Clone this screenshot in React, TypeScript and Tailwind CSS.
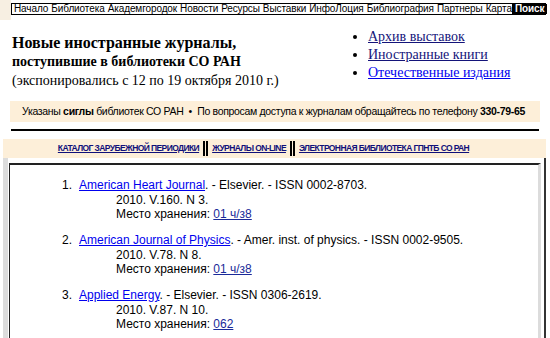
import React from "react";

const navItems = [
  "Начало",
  "Библиотека",
  "Академгородок",
  "Новости",
  "Ресурсы",
  "Выставки",
  "ИнфоЛоция",
  "Библиография",
  "Партнеры",
  "Карта",
];

const journals = [
  {
    title: "American Heart Journal",
    rest: ". - Elsevier. - ISSN 0002-8703.",
    issue: "2010. V.160. N 3.",
    place: "01 ч/з8",
  },
  {
    title: "American Journal of Physics",
    rest: ". - Amer. inst. of physics. - ISSN 0002-9505.",
    issue: "2010. V.78. N 8.",
    place: "01 ч/з8",
  },
  {
    title: "Applied Energy",
    rest: ". - Elsevier. - ISSN 0306-2619.",
    issue: "2010. V.87. N 10.",
    place: "062",
  },
];

function DoubleBar() {
  return <span className="inline-block w-[5px] h-[15px] border-x-2 border-black mx-[4px] align-middle" />;
}

export default function App() {
  return (
    <div className="w-[550px] h-[338px] overflow-hidden bg-white relative font-['Liberation_Sans',Arial,sans-serif] text-black">
      {/* top menu */}
      <div className="flex items-start h-[20px]">
        <div className="w-[11px] h-[20px] shrink-0 bg-[#f7efe2]" />
        <div className="mt-[3px] w-[535px] flex items-stretch justify-between h-[12px] border-y border-l border-black text-[10px] leading-[10px] tracking-[-0.1px] whitespace-nowrap">
          <div className="flex gap-[3px] pl-[2px]">
            {navItems.map((n) => (
              <span key={n}>{n}</span>
            ))}
          </div>
          <span className="bg-black text-white font-bold px-[3px]">Поиск</span>
        </div>
      </div>

      {/* header */}
      <div className="flex h-[81px] font-['Liberation_Serif','Times_New_Roman',serif]">
        <div className="pl-[12px] pt-[14px] w-[342px] shrink-0">
          <div className="text-[16px] font-bold leading-[18px]">Новые иностранные журналы,</div>
          <div className="text-[14px] font-bold leading-[18px] mt-[1px]">поступившие в библиотеки СО РАН</div>
          <div className="text-[14px] leading-[18px] mt-[1px]">(экспонировались с 12 по 19 октября 2010 г.)</div>
        </div>
        <ul className="pt-[8px] text-[14px] leading-[18px] list-disc pl-[26px]">
          <li>
            <a className="underline text-[#14147a]">Архив выставок</a>
          </li>
          <li>
            <a className="underline text-[#14147a]">Иностранные книги</a>
          </li>
          <li>
            <a className="underline text-[#0000ee]">Отечественные издания</a>
          </li>
        </ul>
      </div>

      {/* notice */}
      <div className="mx-[10px] h-[21px] bg-[#fdefd9] flex items-center pl-[12px] text-[10.5px] tracking-[-0.32px] whitespace-nowrap">
        Указаны&nbsp;<b>сиглы</b>&nbsp;библиотек СО РАН&nbsp;&nbsp;•&nbsp;&nbsp;По вопросам доступа к журналам обращайтесь по телефону&nbsp;<b>330-79-65</b>
      </div>
      <div className="mx-[11px] mt-[7px] h-[2px] bg-black" />

      {/* catalog links */}
      <div className="ml-[3px] mr-[4px] mt-[8px] h-[19px] bg-[#fdefd9] flex items-center justify-center pr-[22px] text-[8.5px] font-bold tracking-[-0.6px] whitespace-nowrap">
        <a className="underline text-[#10107a]">КАТАЛОГ ЗАРУБЕЖНОЙ ПЕРИОДИКИ</a>
        <DoubleBar />
        <a className="underline text-[#10107a]">ЖУРНАЛЫ ON-LINE</a>
        <DoubleBar />
        <a className="underline text-[#10107a]">ЭЛЕКТРОННАЯ БИБЛИОТЕКА ГПНТБ СО РАН</a>
      </div>

      {/* content */}
      <div className="ml-[3px] mr-[4px] flex h-[200px] border-l-[5px] border-[#dcdcdc] border-r-2 border-r-[#333] pt-[5px]">
        <div className="ml-[1px] flex-1 border-t-2 border-l border-[#222] border-r-[3px] border-r-[#dcdcdc] mr-[3px] pt-[13px] pl-[52px] text-[12px] leading-[14.5px]">
          {journals.map((j, i) => (
            <div key={j.title} className="flex mb-[11.5px]">
              <span className="w-[17px] shrink-0">{i + 1}.</span>
              <div>
                <div>
                  <a className="underline text-[#0000ee]">{j.title}</a>
                  {j.rest}
                </div>
                <div className="pl-[37px]">{j.issue}</div>
                <div className="pl-[37px]">
                  Место хранения: <a className="underline text-[#1a2a99]">{j.place}</a>
                </div>
              </div>
            </div>
          ))}
        </div>
      </div>
    </div>
  );
}
